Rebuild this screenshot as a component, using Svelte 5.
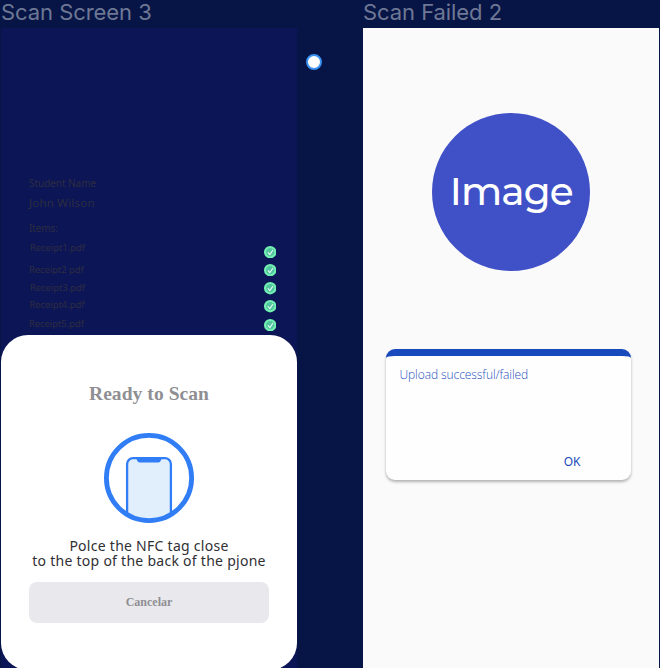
<script>
  const receipts = [
    { name: 'Receipt1.pdf', height: 22, indent: 1 },
    { name: 'Receipt2 pdf', height: 18, indent: 0 },
    { name: 'Receipt3.pdf', height: 17, indent: 1 },
    { name: 'Receipt4.pdf', height: 19, indent: 0.5 },
    { name: 'Receipt5.pdf', height: 18, indent: 0 }
  ];
</script>

<main class="board">
  <section class="frame">
    <h2>Scan Screen 3</h2>
    <div class="screen scan">
      <div class="details">
        <p class="label">Student Name</p>
        <p class="student">John Wilson</p>
        <p class="items">Items:</p>
        <div class="files">
          <ul class="names">
            {#each receipts as file}
              <li style="height: {file.height}px; padding-left: {file.indent}px">{file.name}</li>
            {/each}
          </ul>
          <div class="checks">
            {#each receipts as file}
              <svg width="12.4" height="12.4" viewBox="0 0 24 24" aria-label="{file.name} uploaded">
                <circle cx="12" cy="12" r="12" fill="#71f0b1" />
                <circle cx="12" cy="12" r="8" fill="#53c4a0" />
                <path d="M7.4 12.2l4 4.4 6-9" fill="none" stroke="#e9fff6" stroke-width="2" />
              </svg>
            {/each}
          </div>
        </div>
      </div>
      <div class="sheet">
        <h3>Ready to Scan</h3>
        <svg class="phone" width="90" height="90" viewBox="0 0 90 90" aria-hidden="true">
          <defs><clipPath id="ring"><circle cx="45" cy="45" r="43" /></clipPath></defs>
          <g clip-path="url(#ring)">
            <rect x="23.1" y="25.1" width="43.8" height="80" rx="6" fill="#e1effd" stroke="#307df6" stroke-width="2.3" />
            <path d="M32 25h26l-1 2.2q-.8 2.3-2.8 2.3H35.8q-2 0-2.8-2.3z" fill="#307df6" />
          </g>
          <circle cx="45" cy="45" r="42.6" fill="none" stroke="#307df6" stroke-width="4.8" />
        </svg>
        <p class="hint">Polce the NFC tag close<br />to the top of the back of the pjone</p>
        <button class="cancel">Cancelar</button>
      </div>
    </div>
  </section>

  <div class="gutter"><span class="handle"></span></div>

  <section class="frame">
    <h2>Scan Failed 2</h2>
    <div class="screen result">
      <div class="image"><span>Image</span></div>
      <div class="dialog">
        <p>Upload successful/failed</p>
        <button>OK</button>
      </div>
    </div>
  </section>
</main>

<style>
  :global(body) { margin: 0; background: #061545; }
  h2, h3, p, ul { margin: 0; padding: 0; font-weight: 400; white-space: nowrap; }
  button { border: 0; padding: 0; background: none; }
  .board { display: flex; box-sizing: border-box; width: 660px; height: 668px; padding: 0 1px; overflow: hidden; background: #061545; }
  .frame { width: 296px; flex: none; }
  h2 { height: 28.4px; line-height: 25px; font-family: Inter, sans-serif; font-size: 22px; color: #6e7895; letter-spacing: -0.06px; }
  .screen { box-sizing: border-box; height: 640px; overflow: hidden; }
  .scan { display: flex; flex-direction: column; background: #0c1556; }
  .details { box-sizing: border-box; height: 307px; flex: none; padding: 147px 20.6px 0 28px; font-family: "Noto Sans", sans-serif; color: #2c2d40; }
  .label { height: 16px; line-height: 16px; font-size: 10px; letter-spacing: -0.05px; }
  .student { height: 24px; line-height: 24px; font-size: 11.5px; letter-spacing: 0.2px; }
  .items { height: 25px; line-height: 26px; font-size: 10px; letter-spacing: -0.1px; }
  .files { display: flex; justify-content: space-between; }
  .names { list-style: none; }
  .names li { box-sizing: border-box; line-height: 15px; font-size: 9.5px; letter-spacing: -0.08px; }
  .checks { display: flex; flex-direction: column; gap: 5.8px; padding-top: 5.4px; }
  .checks svg { display: block; }
  .sheet { display: flex; flex-direction: column; align-items: center; box-sizing: border-box; height: 335px; flex: none; border-radius: 27px; padding-top: 45.4px; background: #fff; }
  h3 { height: 52px; line-height: 26px; font-family: "Liberation Serif", serif; font-size: 19.5px; font-weight: 700; color: #8f8f93; letter-spacing: 0.06px; }
  .phone { display: block; flex: none; }
  .hint { margin-top: 16.4px; line-height: 14.4px; font-family: "Noto Sans", sans-serif; font-size: 14px; letter-spacing: 0.27px; text-align: center; color: #303034; }
  .cancel { width: 240px; height: 41px; flex: none; margin-top: 14.4px; border-radius: 8px; background: #e9e8ed; font: 700 12px/41px "Liberation Serif", serif; color: #8f8f93; }
  .gutter { box-sizing: border-box; width: 66px; flex: none; padding: 54px 0 0 9px; }
  .handle { display: block; box-sizing: border-box; width: 16px; height: 16px; border: 2px solid #3b91ee; border-radius: 50%; background: #fff; }
  .result { display: flex; flex-direction: column; align-items: center; padding-top: 84.4px; background: #fafafa; }
  .image { display: flex; align-items: center; justify-content: center; width: 158px; height: 158px; flex: none; margin-left: 0.6px; border-radius: 50%; background: #4051c7; }
  .image span { padding-bottom: 2px; font: 500 39px/48px Montserrat, Inter, sans-serif; letter-spacing: -0.9px; color: #fff; }
  .dialog { display: flex; flex-direction: column; box-sizing: border-box; width: 245px; height: 131px; flex: none; margin: 78px 0 0 -6px; padding: 10px 50px 9px 14px; border-top: 7px solid #194abd; border-radius: 9px; background: #fefefe; box-shadow: 0 2px 3px #0000004a; color: #2850bd; }
  .dialog p { font: 300 12px/18px "Open Sans", sans-serif; letter-spacing: -0.08px; }
  .dialog button { align-self: flex-end; margin-top: auto; font: 400 12px/18px "Noto Sans", sans-serif; color: #194abd; }
</style>
